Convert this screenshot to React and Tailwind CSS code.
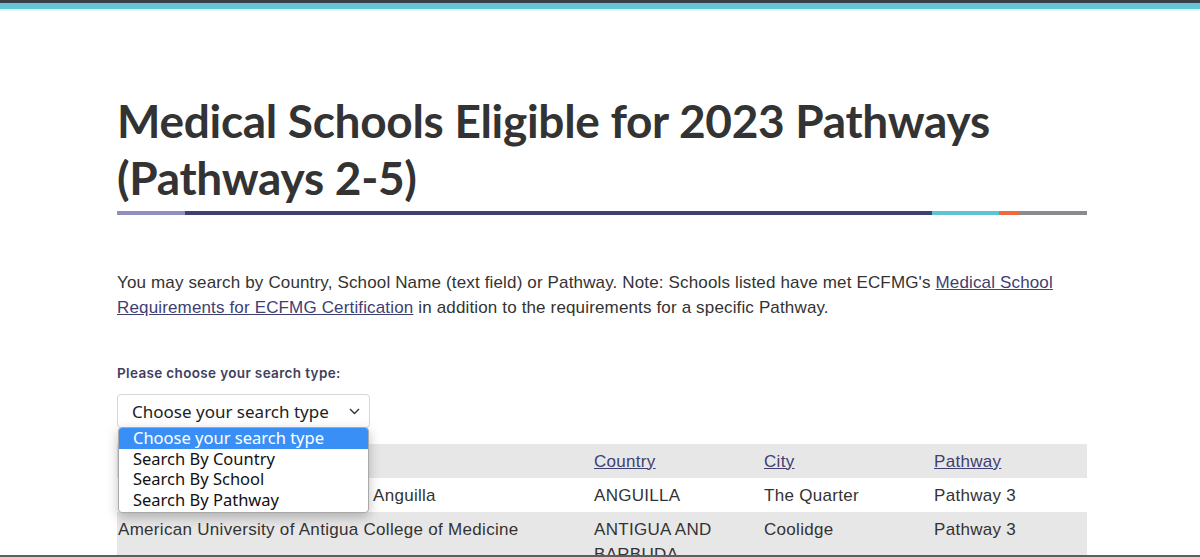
import React from "react";

const rows = [
  { school: "Saint James School of Medicine Anguilla", country: "ANGUILLA", city: "The Quarter", pathway: "Pathway 3" },
  { school: "American University of Antigua College of Medicine", country: "ANTIGUA AND BARBUDA", city: "Coolidge", pathway: "Pathway 3" },
];

const options = ["Choose your search type", "Search By Country", "Search By School", "Search By Pathway"];

export default function App() {
  return (
    <div className="h-[557px] overflow-hidden bg-white flex flex-col">
      <div className="h-[3px] bg-[#3b4045]" />
      <div className="h-[6px] bg-[#62c6d6]" />
      <div className="h-[2px] bg-[#e3f6f8]" />

      <div className="flex-1 overflow-hidden">
        <div className="w-[970px] ml-[117px] pt-[81px]">
          <h1
            className="text-[46px] leading-[57px] font-bold text-[#333333] tracking-[-0.3px] whitespace-nowrap"
            style={{ fontFamily: "Lato, 'Noto Sans', sans-serif" }}
          >
            Medical Schools Eligible for 2023 Pathways
            <br />
            (Pathways 2-5)
          </h1>

          {/* colour bar */}
          <div className="flex h-[4px] mt-[5px]">
            <div className="w-[68px] bg-[#8f90c0]" />
            <div className="w-[747px] bg-[#3e4072]" />
            <div className="w-[67px] bg-[#5dc3d5]" />
            <div className="w-[21px] bg-[#f0693a]" />
            <div className="flex-1 bg-[#8b8a90]" />
          </div>

          <p
            className="mt-[55px] text-[17px] leading-[25px] text-[#333333] tracking-[0.15px]"
            style={{ fontFamily: "'Liberation Sans', Arial, sans-serif" }}
          >
            You may search by Country, School Name (text field) or Pathway. Note: Schools listed have met ECFMG's{" "}
            <a href="#" className="text-[#3e4072] underline">
              Medical School Requirements for ECFMG Certification
            </a>{" "}
            in addition to the requirements for a specific Pathway.
          </p>

          <div
            className="mt-[43px] text-[13.5px] font-semibold text-[#3e405e] tracking-[0.35px]"
            style={{ fontFamily: "Inter, 'Noto Sans', sans-serif" }}
          >
            Please choose your search type:
          </div>

          <div className="relative mt-[11px]" style={{ fontFamily: "'Noto Sans', 'Open Sans', sans-serif" }}>
            <div className="w-[253px] h-[34px] border border-[#d6d6d6] rounded-[4px] flex items-center justify-between pl-[14px] pr-[9px] text-[17px] text-[#222]">
              <span>Choose your search type</span>
              <svg width="11" height="7" viewBox="0 0 11 7" fill="none" stroke="#333" strokeWidth="1.4">
                <path d="M1 1l4.5 4.5L10 1" />
              </svg>
            </div>

            <div className="absolute left-[1px] top-[33px] w-[251px] z-10 bg-white border border-[#a9a9a9] rounded-[4px] shadow-[0_4px_12px_rgba(0,0,0,0.25)] overflow-hidden pb-[2px]">
              {options.map((o, i) => (
                <div
                  key={o}
                  className={`h-[20.5px] leading-[19px] px-[14px] text-[16.5px] ${
                    i === 0 ? "bg-[#3a8ff7] text-white" : "text-[#111]"
                  }`}
                >
                  {o}
                </div>
              ))}
            </div>

            <table
              className="mt-[16px] w-[970px] table-fixed text-[17px] text-[#333333] tracking-[0.3px]"
              style={{ fontFamily: "'Liberation Sans', Arial, sans-serif" }}
            >
              <colgroup>
                <col className="w-[477px]" />
                <col className="w-[170px]" />
                <col className="w-[170px]" />
                <col />
              </colgroup>
              <thead>
                <tr className="bg-[#e8e7e8] h-[34px]">
                  <th className="text-left font-normal px-[1px]">
                    <a href="#" className="text-[#3e4072] underline">School Name</a>
                  </th>
                  <th className="text-left font-normal">
                    <a href="#" className="text-[#3e4072] underline">Country</a>
                  </th>
                  <th className="text-left font-normal">
                    <a href="#" className="text-[#3e4072] underline">City</a>
                  </th>
                  <th className="text-left font-normal">
                    <a href="#" className="text-[#3e4072] underline">Pathway</a>
                  </th>
                </tr>
              </thead>
              <tbody>
                {rows.map((r, i) => (
                  <tr key={r.school} className={i % 2 ? "bg-[#e8e7e8]" : "bg-white"}>
                    <td className="align-top pt-[5px] pb-[4px] px-[1px] leading-[25px]">{r.school}</td>
                    <td className="align-top pt-[5px] pb-[4px] leading-[25px] pr-[20px]">{r.country}</td>
                    <td className="align-top pt-[5px] pb-[4px] leading-[25px]">{r.city}</td>
                    <td className="align-top pt-[5px] pb-[4px] leading-[25px]">{r.pathway}</td>
                  </tr>
                ))}
              </tbody>
            </table>
          </div>
        </div>
      </div>
      <div className="h-[2px] bg-[#5e5e5e]" />
    </div>
  );
}
